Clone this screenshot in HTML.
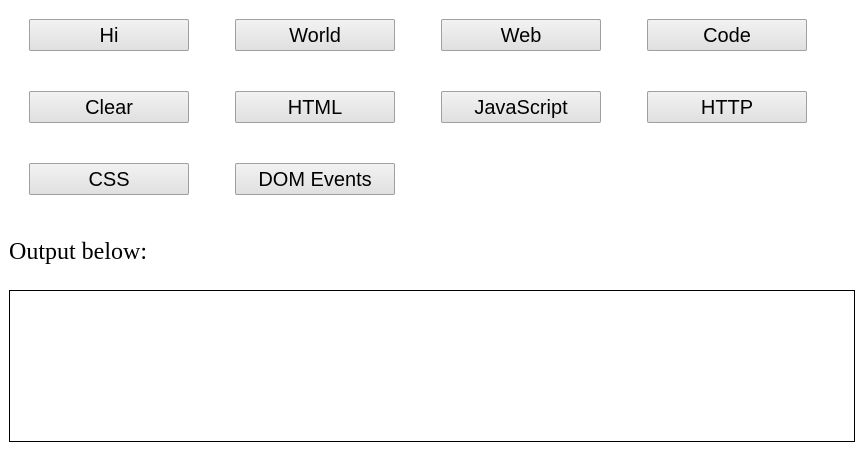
<!DOCTYPE html>
<html><head><style>
body{margin:0;width:865px;height:452px;background:#fff;position:relative;overflow:hidden}
.b{position:absolute;width:160px;height:32px;box-sizing:border-box;border:1px solid #a0a0a0;border-radius:2px;background:linear-gradient(#f2f2f2,#e0e0e0);font:20px "Liberation Sans",sans-serif;color:#000;text-align:center;line-height:32px}
.t{position:absolute;left:9px;top:239px;font:24px "Liberation Serif",serif;color:#000}
.o{position:absolute;left:9px;top:290px;width:846px;height:152px;box-sizing:border-box;border:1px solid #000}
</style></head><body>
<div class="b" style="left:29px;top:19px">Hi</div>
<div class="b" style="left:235px;top:19px">World</div>
<div class="b" style="left:441px;top:19px">Web</div>
<div class="b" style="left:647px;top:19px">Code</div>
<div class="b" style="left:29px;top:91px">Clear</div>
<div class="b" style="left:235px;top:91px">HTML</div>
<div class="b" style="left:441px;top:91px">JavaScript</div>
<div class="b" style="left:647px;top:91px">HTTP</div>
<div class="b" style="left:29px;top:163px">CSS</div>
<div class="b" style="left:235px;top:163px">DOM Events</div>
<div class="t">Output below:</div>
<div class="o"></div>
</body></html>
